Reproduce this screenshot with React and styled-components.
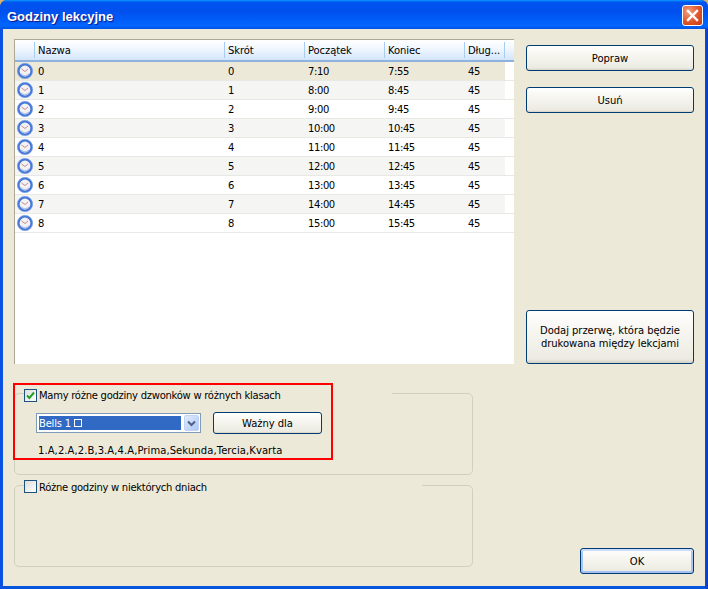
import React from 'react';
import styled, { createGlobalStyle } from 'styled-components';

const Global = createGlobalStyle`
  html, body { margin: 0; padding: 0; background: #d9b36a; }
  * { box-sizing: border-box; }
`;

const FONT = `"DejaVu Sans", Verdana, sans-serif`;

const Window = styled.div`
  position: relative;
  width: 708px;
  height: 589px;
  display: flex;
  flex-direction: column;
  font-family: ${FONT};
  font-size: 10px;
  color: #000;
  background: linear-gradient(90deg, #0a4fe6 0, #0855dd 3px, #0855dd 704px, #0a3ac8 100%);
  border-radius: 7px 7px 0 0;
  padding: 0 3px 3px;
  overflow: hidden;
`;

const TitleBar = styled.div`
  height: 29px;
  margin: 0 -3px;
  padding: 2px 5px 0 7px;
  flex: none;
  display: flex;
  align-items: center;
  justify-content: space-between;
  background: linear-gradient(180deg, #0997ff 0, #0053ee 8%, #0050ee 40%, #0066ff 88%, #0052e6 100%);
`;

const Title = styled.span`
  font: bold 13px "Liberation Sans", Arial, sans-serif;
  color: #fff;
  margin-top: 2px;
  text-shadow: 1px 1px 1px #0f1089;
`;

const CloseBox = styled.div`
  width: 21px;
  height: 21px;
  border: 1px solid #fff;
  border-radius: 3px;
  background: radial-gradient(circle at 30% 30%, #f0a080, #e0552a 55%, #c23a12);
  display: flex;
  align-items: center;
  justify-content: center;
`;

const Body = styled.div`
  position: relative;
  flex: 1;
  background: #ece9d8;
  display: grid;
  grid-template-columns: 500px 168px;
  grid-template-rows: 325px 1fr;
  column-gap: 12px;
  padding: 10px 11px 0;
`;

const TableFrame = styled.div`
  background: #fff;
  border-top: 1px solid #aca899;
  border-left: 1px solid #aca899;
  overflow: hidden;
`;

const Grid = styled.div`
  display: grid;
  grid-template-columns: 19px 190px 80px 80px 80px 41px;
  width: 490px;
`;

const HeaderBar = styled.div`
  height: 22px;
  background: linear-gradient(180deg, #fff 0, #f2f7fe 40%, #d3e5fb 100%);
  border-bottom: 2px solid #8fb2dd;
  width: 499px;
`;

const HeaderCell = styled.div`
  height: 16px;
  margin-top: 2px;
  padding: 1px 0 0 3px;
  line-height: 16px;
  border-left: 1px solid #a9cdf1;
  color: #000;
  letter-spacing: -0.1px;
  white-space: nowrap;
  &:last-child { border-right: 1px solid #a9cdf1; }
`;

const Row = styled.div`
  height: 19px;
  width: 499px;
  border-bottom: 1px solid #e8e8e4;
  background: linear-gradient(90deg, ${p => p.$bg} 490px, #fff 490px);
`;

const Cell = styled.div`
  height: 18px;
  line-height: 18px;
  padding: 1px 0 0 4px;
  letter-spacing: -0.4px;
`;

const IconCell = styled.div`
  height: 18px;
  display: flex;
  align-items: center;
  justify-content: center;
`;

const Buttons = styled.div`
  grid-row: 1;
  grid-column: 2;
  display: flex;
  flex-direction: column;
  padding-top: 6px;
`;

const Btn = styled.button`
  font: 10px ${FONT};
  color: #000;
  padding: 0;
  width: ${p => p.$w || 168}px;
  height: ${p => p.$h || 26}px;
  margin-top: ${p => p.$mt || 0}px;
  border: 1px solid #003c74;
  border-radius: 3px;
  background: linear-gradient(180deg, #fff 0, #f5f4ee 45%, #ecebe3 92%, #d6d0c5 100%);
  line-height: 13px;
  letter-spacing: -0.05px;
  ${p => p.$default ? 'box-shadow: inset 0 2px 0 #cddcf8, inset 0 -2px 0 #a6c2f0, inset 2px 0 0 #a9c4f0, inset -2px 0 0 #a9c4f0;' : ''}
`;

const Lower = styled.div`
  grid-row: 2;
  grid-column: 1;
  padding-top: 23px;
  display: flex;
  flex-direction: column;
  gap: 4px;
  width: 459px;
`;

const Group = styled.fieldset`
  margin: 0;
  height: 88px;
  padding: 0 0 0 21px;
  border: 1px solid #d0d0bf;
  border-radius: 5px;
  min-width: 0;
`;

const Legend = styled.legend`
  margin-left: -12px;
  display: flex;
  align-items: flex-start;
  gap: 2px;
  height: 13px;
  padding: ${p => p.$top}px ${p => p.$pr}px 0 0;
`;

const LegendText = styled.span`
  line-height: 13px;
  white-space: nowrap;
  letter-spacing: -0.27px;
  margin-top: ${p => p.$mt || 0}px;
`;

const Check = styled.span`
  flex: none;
  width: 13px;
  height: 13px;
  border: 1px solid #1c5180;
  background: linear-gradient(135deg, #dcdcd7 0, #fff 100%);
  display: flex;
  align-items: center;
  justify-content: center;
`;

const ComboRow = styled.div`
  display: flex;
  gap: 12px;
  margin-top: 12px;
  align-items: center;
`;

const Combo = styled.div`
  width: 165px;
  height: 20px;
  border: 1px solid #7f9db9;
  background: #fff;
  display: flex;
  align-items: center;
  gap: 3px;
  padding: 0 1px 0 2px;
`;

const ComboValue = styled.div`
  flex: 1;
  height: 14px;
  background: #316ac5;
  color: #fff;
  letter-spacing: -0.2px;
  display: flex;
  align-items: center;
  gap: 3px;
`;

const Tofu = styled.span`
  width: 8px;
  height: 8px;
  border: 1px solid #fff;
`;

const ComboArrow = styled.div`
  width: 15px;
  height: 16px;
  background: linear-gradient(135deg, #e1eafe 0, #aec8f7 100%);
  border: 1px solid #c3d3f3;
  border-radius: 2px;
  display: flex;
  align-items: center;
  justify-content: center;
`;

const ClassList = styled.div`
  margin-top: 10px;
  margin-left: 2px;
  line-height: 13px;
  letter-spacing: 0.08px;
`;

const OkWrap = styled.div`
  grid-row: 2;
  grid-column: 2;
  display: flex;
  justify-content: flex-end;
  align-items: flex-end;
  padding-bottom: 12px;
`;

const RedFrame = styled.div`
  position: absolute;
  left: 10px;
  top: 354px;
  width: 320px;
  height: 77px;
  border: 2px solid #f00;
  pointer-events: none;
`;

const cols = ['', 'Nazwa', 'Skrót', 'Początek', 'Koniec', 'Dług...'];
const rows = [
  ['0', '7:10', '7:55'], ['1', '8:00', '8:45'], ['2', '9:00', '9:45'],
  ['3', '10:00', '10:45'], ['4', '11:00', '11:45'], ['5', '12:00', '12:45'],
  ['6', '13:00', '13:45'], ['7', '14:00', '14:45'], ['8', '15:00', '15:45'],
];

const Clock = () => (
  <svg width="16" height="16" viewBox="0 0 16 16">
    <circle cx="8" cy="8" r="6.6" fill="#f3f1f2" stroke="#4477d8" strokeWidth="2.4" />
    <circle cx="8" cy="8" r="7.6" fill="none" stroke="#86a8e8" strokeWidth="0.6" />
    <path d="M8 8.5 L4.5 6 M8 8.5 L11 6" stroke="#c98c90" strokeWidth="1" fill="none" />
    <path d="M4 11 A5.2 5.2 0 0 0 12 11" stroke="#a9bfea" strokeWidth="1.2" fill="none" />
  </svg>
);

const rowBg = i => (i === 0 ? '#ece9d8' : i % 2 === 1 ? '#f5f5f3' : '#ffffff');

export default function App() {
  return (
    <Window>
      <Global />
      <TitleBar>
        <Title>Godziny lekcyjne</Title>
        <CloseBox>
          <svg width="13" height="13" viewBox="0 0 13 13">
            <path d="M2 2 L11 11 M11 2 L2 11" stroke="#fff" strokeWidth="2.4" strokeLinecap="square" />
          </svg>
        </CloseBox>
      </TitleBar>
      <Body>
        <TableFrame>
          <HeaderBar>
            <Grid>
              {cols.map((c, i) => (i === 0 ? <div key={i} /> : <HeaderCell key={i}>{c}</HeaderCell>))}
            </Grid>
          </HeaderBar>
          {rows.map((r, i) => (
            <Row key={i} $bg={rowBg(i)}>
              <Grid>
                <IconCell><Clock /></IconCell>
                <Cell>{r[0]}</Cell>
                <Cell>{r[0]}</Cell>
                <Cell>{r[1]}</Cell>
                <Cell>{r[2]}</Cell>
                <Cell>45</Cell>
              </Grid>
            </Row>
          ))}
        </TableFrame>
        <Buttons>
          <Btn>Popraw</Btn>
          <Btn $mt={16}>Usuń</Btn>
          <Btn $mt={197} $h={54}>Dodaj przerwę, która będzie<br />drukowana między lekcjami</Btn>
        </Buttons>
        <Lower>
          <Group>
            <Legend $top={2} $pr={111}>
              <Check>
                <svg width="9" height="9" viewBox="0 0 9 9">
                  <path d="M1 4.5 L3.4 7 L8 1.5" stroke="#21a121" strokeWidth="2" fill="none" />
                </svg>
              </Check>
              <LegendText>Mamy różne godziny dzwonków w różnych klasach</LegendText>
            </Legend>
            <ComboRow>
              <Combo>
                <ComboValue>Bells 1<Tofu /></ComboValue>
                <ComboArrow>
                  <svg width="9" height="7" viewBox="0 0 9 7">
                    <path d="M1 1.5 L4.5 5 L8 1.5" stroke="#4d6185" strokeWidth="2" fill="none" />
                  </svg>
                </ComboArrow>
              </Combo>
              <Btn $w={109} $h={22}>Ważny dla</Btn>
            </ComboRow>
            <ClassList>1.A,2.A,2.B,3.A,4.A,Prima,Sekunda,Tercia,Kvarta</ClassList>
          </Group>
          <Group>
            <Legend $top={1} $pr={215}>
              <Check />
              <LegendText $mt={1}>Różne godziny w niektórych dniach</LegendText>
            </Legend>
          </Group>
        </Lower>
        <OkWrap>
          <Btn $default $w={114} $h={26}>OK</Btn>
        </OkWrap>
        <RedFrame />
      </Body>
    </Window>
  );
}
